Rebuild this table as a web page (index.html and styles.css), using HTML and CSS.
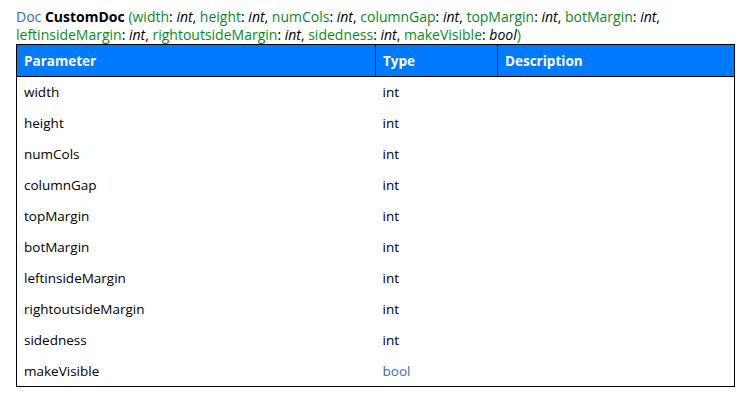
FILE: index.html
```html
<html>

<head>
  <link rel="stylesheet" href="styles.css">
</head>

<body>
  <div class="doc">
    <p class="signature">
      <span class="kind">Doc</span> <b class="name">CustomDoc</b> <span class="arg">(width</span>: <i>int</i>,
      <span class="arg">height</span>: <i>int</i>, <span class="arg">numCols</span>: <i>int</i>,
      <span class="arg">columnGap</span>: <i>int</i>, <span class="arg">topMargin</span>: <i>int</i>,
      <span class="arg">botMargin</span>: <i>int</i>, <span class="arg">leftinsideMargin</span>: <i>int</i>,
      <span class="arg">rightoutsideMargin</span>: <i>int</i>, <span class="arg">sidedness</span>: <i>int</i>,
      <span class="arg">makeVisible</span>: <i>bool</i><span class="arg">)</span>
    </p>
    <table class="params">
      <thead>
        <tr>
          <th class="col-name">Parameter</th>
          <th class="col-type">Type</th>
          <th class="col-desc">Description</th>
        </tr>
      </thead>
      <tbody>
        <tr><td>width</td><td>int</td><td></td></tr>
        <tr><td>height</td><td>int</td><td></td></tr>
        <tr><td>numCols</td><td>int</td><td></td></tr>
        <tr><td>columnGap</td><td>int</td><td></td></tr>
        <tr><td>topMargin</td><td>int</td><td></td></tr>
        <tr><td>botMargin</td><td>int</td><td></td></tr>
        <tr><td>leftinsideMargin</td><td>int</td><td></td></tr>
        <tr><td>rightoutsideMargin</td><td>int</td><td></td></tr>
        <tr><td>sidedness</td><td>int</td><td></td></tr>
        <tr><td>makeVisible</td><td class="link">bool</td><td></td></tr>
      </tbody>
    </table>
  </div>
</body>

</html>
```

FILE: styles.css
```css
body {
  margin: 0;
  background: #ffffff;
  font-family: "Open Sans", "Liberation Sans", sans-serif;
  font-size: 14px;
  color: #000000;
}

.doc {
  padding: 8px 0 0 16px;
  width: 719px;
}

.signature {
  margin: 0;
  line-height: 18px;
}

.kind {
  color: #2f6fb9;
}

.name {
  font-weight: bold;
}

.arg {
  color: #0a8a1e;
}

.params {
  width: 719px;
  border-collapse: collapse;
  border: 1px solid #000000;
  table-layout: fixed;
  font-family: "Open Sans", "Liberation Sans", sans-serif;
  font-size: 13.5px;
}

.params th {
  background: #007bff;
  color: #ffffff;
  text-align: left;
  font-weight: bold;
  font-size: 13.5px;
  height: 32px;
  padding: 0 7px;
  border-right: 1px solid #000000;
  border-bottom: 1px solid #000000;
}

.col-name {
  width: 344px;
}

.col-type {
  width: 107px;
}

.params td {
  height: 31px;
  padding: 0 7px;
}

.link {
  color: #2f6fb9;
}
```
